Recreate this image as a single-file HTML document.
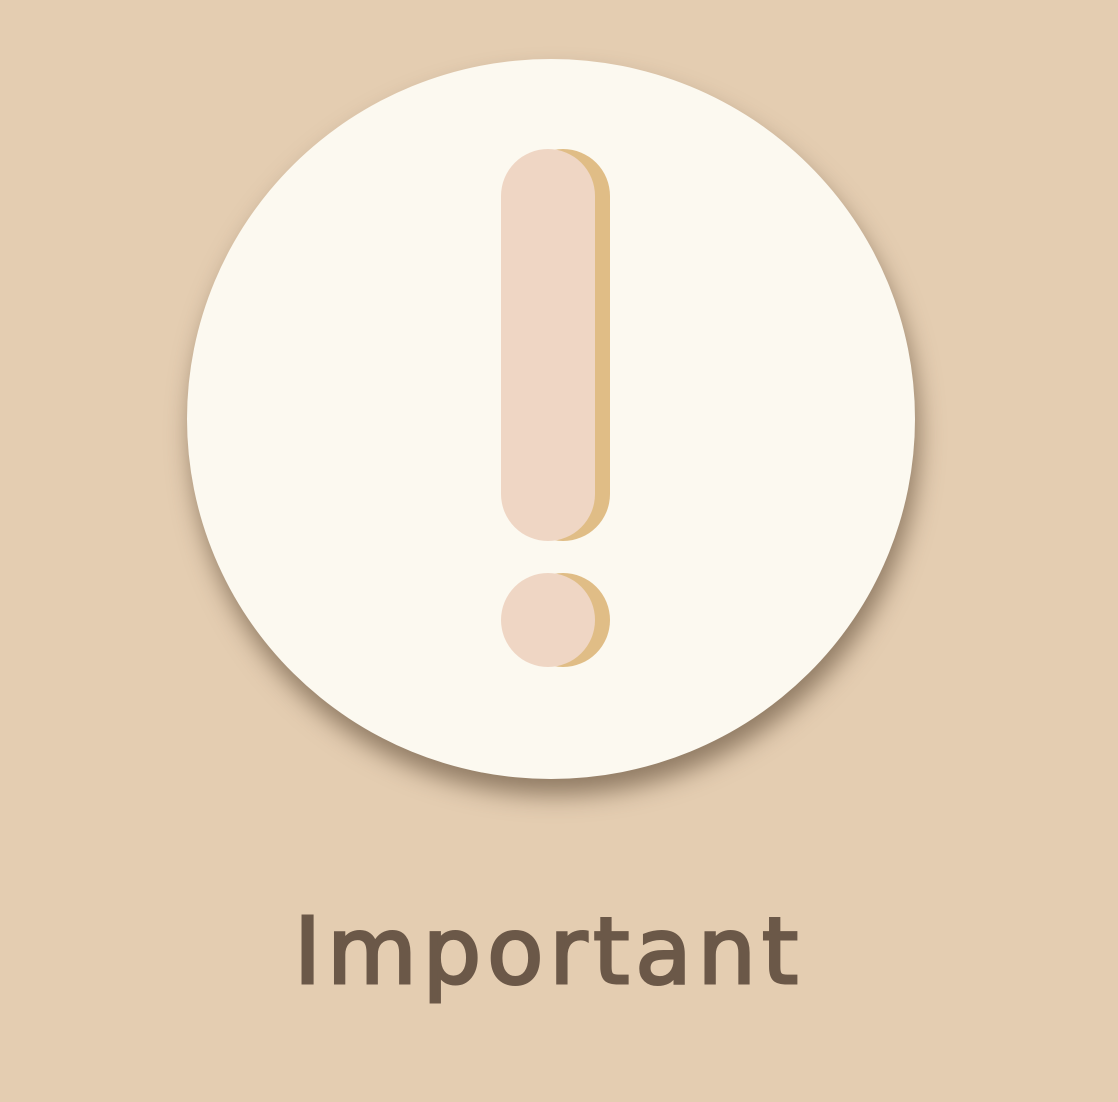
<!DOCTYPE html>
<html><head><style>
html,body{margin:0;padding:0;width:1118px;height:1102px;background:#e4cdb1;overflow:hidden}
.c{position:absolute;left:187px;top:59px;width:728px;height:720px;border-radius:50%;background:#fcf9f0;box-shadow:4px 16px 24px rgba(90,70,50,0.6)}
.b{position:absolute;border-radius:47px}
.t{position:absolute;left:-12px;width:1118px;top:892px;text-align:center;font-family:"DejaVu Sans",sans-serif;font-weight:normal;font-size:92px;line-height:120px;color:#6b5848;letter-spacing:6px;text-indent:4px;-webkit-text-stroke:3px #6b5848}
</style></head><body>
<div class="c"></div>
<div class="b" style="left:516px;top:149px;width:94px;height:392px;background:#e0bd86"></div>
<div class="b" style="left:501px;top:149px;width:94px;height:392px;background:#efd6c4"></div>
<div class="b" style="left:516px;top:573px;width:94px;height:94px;background:#e0bd86"></div>
<div class="b" style="left:501px;top:573px;width:94px;height:94px;background:#efd6c4"></div>
<div class="t">Important</div>
</body></html>
